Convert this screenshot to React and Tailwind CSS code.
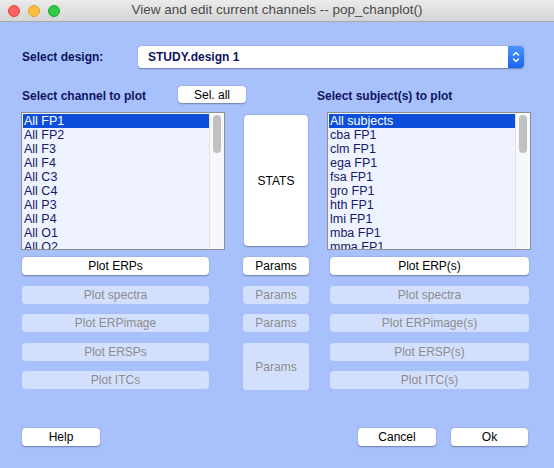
import React from 'react';

const CHANNELS = ['All FP1', 'All FP2', 'All F3', 'All F4', 'All C3', 'All C4', 'All P3', 'All P4', 'All O1', 'All O2'];
const SUBJECTS = ['All subjects', 'cba FP1', 'clm FP1', 'ega FP1', 'fsa FP1', 'gro FP1', 'hth FP1', 'lmi FP1', 'mba FP1', 'mma FP1'];

const font = { fontFamily: '"Liberation Sans", Arial, sans-serif' };

function Btn({ children, disabled, className = '' }) {
  return (
    <div
      className={`flex items-center justify-center rounded-[4px] text-[12px] ${
        disabled
          ? 'bg-[#d3e0fd] text-[#8c8c8c]'
          : 'bg-white text-black shadow-[0_0.5px_1.5px_rgba(0,0,0,0.35)]'
      } ${className}`}
    >
      {children}
    </div>
  );
}

function ListBox({ items, className = '' }) {
  return (
    <div className={`relative h-[138px] w-[204px] overflow-hidden border border-[#8e8e8e] bg-[#eef3ff] ${className}`}>
      <div className="pl-[1px] pt-[1px]">
        {items.map((it, i) => (
          <div
            key={it}
            className={`h-[14px] w-[187px] pl-[1px] text-[12.5px] leading-[14px] ${
              i === 0 ? 'bg-[#0d4fdb] text-white' : 'text-[#16186a]'
            }`}
          >
            {it}
          </div>
        ))}
      </div>
      <div className="absolute right-0 top-0 h-full w-[15px] border-l border-[#e2e2e2] bg-[#f7f8fa]">
        <div className="ml-[3px] mt-[2px] h-[38px] w-[8px] rounded-full bg-[#c1c1c1]" />
      </div>
    </div>
  );
}

export default function App() {
  return (
    <div className="h-[468px] w-[554px] overflow-hidden bg-[#a8c1fd]" style={font}>
      {/* title bar */}
      <div className="relative flex h-[22px] items-center justify-center border-b border-[#a9a9a9] bg-gradient-to-b from-[#ebebeb] to-[#d5d5d5]">
        <div className="absolute left-[8px] top-[5px] flex gap-[8px]">
          <div className="h-[12px] w-[12px] rounded-full border border-[#e0443e] bg-[#fc615d]" />
          <div className="h-[12px] w-[12px] rounded-full border border-[#dea236] bg-[#fdbd41]" />
          <div className="h-[12px] w-[12px] rounded-full border border-[#1aab29] bg-[#35c94b]" />
        </div>
        <span className="text-[13.5px] text-[#4a4a4a]">View and edit current channels -- pop_chanplot()</span>
      </div>

      {/* design row */}
      <div className="mt-[24px] flex h-[22px] items-center">
        <span className="ml-[22px] w-[116px] text-[12px] font-bold text-[#0f1460]">Select design:</span>
        <div className="flex h-[22px] w-[386px] items-center rounded-[4px] bg-white shadow-[0_0.5px_1.5px_rgba(0,0,0,0.35)]">
          <span className="ml-[10px] flex-1 text-[12px] font-bold text-[#0f1460]">STUDY.design 1</span>
          <div className="flex h-[22px] w-[16px] flex-col items-center justify-center rounded-r-[4px] bg-gradient-to-b from-[#4a94ff] to-[#1565f2]">
            <svg width="8" height="14" viewBox="0 0 8 14" fill="none" stroke="white" strokeWidth="1.4" strokeLinecap="round" strokeLinejoin="round">
              <path d="M1.5 5 L4 2.5 L6.5 5" />
              <path d="M1.5 9 L4 11.5 L6.5 9" />
            </svg>
          </div>
        </div>
      </div>

      {/* labels row */}
      <div className="mt-[18px] flex h-[17px] items-end">
        <span className="ml-[22px] w-[156px] text-[12px] font-bold leading-[14px] text-[#0f1460]">Select channel to plot</span>
        <Btn className="h-[17px] w-[68px] self-start">Sel. all</Btn>
        <span className="ml-[71px] text-[12px] font-bold leading-[14px] text-[#0f1460]">Select subject(s) to plot</span>
      </div>

      {/* lists */}
      <div className="mt-[9px] flex">
        <ListBox items={CHANNELS} className="ml-[21px]" />
        <Btn className="ml-[19px] mt-[3px] h-[131px] w-[64px]">STATS</Btn>
        <ListBox items={SUBJECTS} className="ml-[19px]" />
      </div>

      {/* plot buttons */}
      <div className="mt-[7px] flex">
        <div className="ml-[22px] flex w-[187px] flex-col gap-[10px]">
          <Btn className="h-[18px]">Plot ERPs</Btn>
          <Btn disabled className="mt-[1px] h-[18px]">Plot spectra</Btn>
          <Btn disabled className="h-[18px]">Plot ERPimage</Btn>
          <Btn disabled className="mt-[1px] h-[18px]">Plot ERSPs</Btn>
          <Btn disabled className="h-[18px]">Plot ITCs</Btn>
        </div>
        <div className="ml-[34px] flex w-[66px] flex-col gap-[10px]">
          <Btn className="h-[18px]">Params</Btn>
          <Btn disabled className="mt-[1px] h-[18px]">Params</Btn>
          <Btn disabled className="h-[18px]">Params</Btn>
          <Btn disabled className="mt-[1px] h-[47px]">Params</Btn>
        </div>
        <div className="ml-[21px] flex w-[199px] flex-col gap-[10px]">
          <Btn className="h-[18px]">Plot ERP(s)</Btn>
          <Btn disabled className="mt-[1px] h-[18px]">Plot spectra</Btn>
          <Btn disabled className="h-[18px]">Plot ERPimage(s)</Btn>
          <Btn disabled className="mt-[1px] h-[18px]">Plot ERSP(s)</Btn>
          <Btn disabled className="h-[18px]">Plot ITC(s)</Btn>
        </div>
      </div>

      {/* bottom buttons */}
      <div className="mt-[38px] flex">
        <Btn className="ml-[22px] h-[18px] w-[78px]">Help</Btn>
        <Btn className="ml-[258px] h-[18px] w-[78px]">Cancel</Btn>
        <Btn className="ml-[15px] h-[18px] w-[77px]">Ok</Btn>
      </div>
    </div>
  );
}
